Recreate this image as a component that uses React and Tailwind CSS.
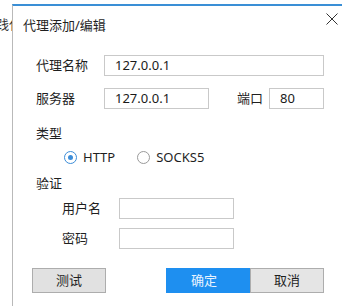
import React from "react";

function Radio({ checked, label, className = "" }) {
  return (
    <div className={`flex items-center ${className}`}>
      <span
        className={`w-[13px] h-[13px] rounded-full border flex items-center justify-center bg-white ${
          checked ? "border-[#3c8dd8]" : "border-[#9a9a9a]"
        }`}
      >
        {checked && <span className="w-[5px] h-[5px] rounded-full bg-[#3c8dd8]" />}
      </span>
      <span className="ml-[6px]">{label}</span>
    </div>
  );
}

function Field({ value = "", className = "" }) {
  return (
    <div
      className={`h-[21px] border border-[#c9c9c9] bg-white pl-[10px] flex items-center text-[#1a1a1a] ${className}`}
    >
      {value}
    </div>
  );
}

export default function App() {
  return (
    <div className="w-[342px] h-[306px] bg-white flex overflow-hidden text-[13px] leading-[19px] text-[#1f1f1f] font-['Noto_Sans','Noto_Sans_CJK_SC',sans-serif]">
      <div className="w-[12px] shrink-0 overflow-hidden pt-[15px] flex justify-end">
        <div className="whitespace-nowrap mr-[-10px] text-[#333]">践代</div>
      </div>
      <div className="flex-1 mt-[4px] border-l border-l-[#b9b9b9] border-t-2 border-t-[#3a8fd6] flex flex-col">
        <div className="h-[38px] flex justify-between pl-[10px] pr-[4px]">
          <div className="self-center">代理添加/编辑</div>
          <svg width="12" height="12" viewBox="0 0 12 12" className="mt-[7px]">
            <path d="M0.5 0.5 L11.5 11.5 M11.5 0.5 L0.5 11.5" stroke="#333" strokeWidth="1" />
          </svg>
        </div>
        <div className="pl-[19px] pr-[18px] flex flex-col">
          <div className="mt-[11px] flex items-center">
            <div className="w-[68px] ml-[4px]">代理名称</div>
            <Field value="127.0.0.1" className="flex-1" />
          </div>
          <div className="mt-[12px] flex items-center">
            <div className="w-[68px] ml-[4px]">服务器</div>
            <Field value="127.0.0.1" className="w-[105px]" />
            <div className="ml-[28px] w-[32px]">端口</div>
            <Field value="80" className="flex-1" />
          </div>
          <div className="mt-[15px] ml-[4px]">类型</div>
          <div className="mt-[5px] ml-[32px] flex items-center">
            <Radio checked label="HTTP" />
            <Radio label="SOCKS5" className="ml-[22px]" />
          </div>
          <div className="mt-[7px] ml-[4px]">验证</div>
          <div className="mt-[5px] flex items-center">
            <div className="w-[57px] ml-[30px]">用户名</div>
            <Field className="w-[115px]" />
          </div>
          <div className="mt-[9px] flex items-center">
            <div className="w-[57px] ml-[30px]">密码</div>
            <Field className="w-[115px]" />
          </div>
          <div className="mt-[19px] flex items-center">
            <div className="w-[74px] h-[25px] bg-[#e1e1e1] border border-[#adadad] flex items-center justify-center">
              测试
            </div>
            <div className="flex-1" />
            <div className="w-[84px] h-[25px] bg-[#1e8ff0] text-[#e8f3ff] flex items-center justify-center pr-[8px]">
              确定
            </div>
            <div className="w-[74px] h-[25px] bg-[#e5e5e5] border border-[#adadad] flex items-center justify-center">
              取消
            </div>
          </div>
        </div>
      </div>
    </div>
  );
}
